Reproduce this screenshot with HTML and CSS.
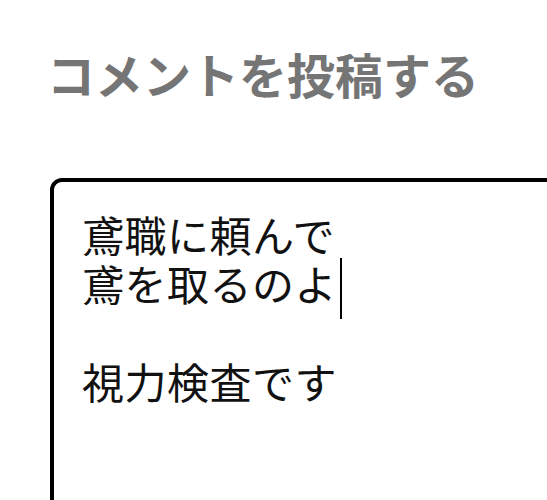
FILE: index.html
```html
<!DOCTYPE html>
<html lang="ja">
<head>
<meta charset="utf-8">
<link rel="stylesheet" href="styles.css">
</head>
<body>
<div class="page">
  <h1 class="title">コメントを投稿する</h1>
  <div class="comment-box">
    <div class="comment-text">鳶職に頼んで<br>鳶を取るのよ<span class="caret"></span><br><br>視力検査です</div>
  </div>
</div>
</body>
</html>
```
FILE: styles.css
```css
html, body {
  margin: 0;
  padding: 0;
  background: #ffffff;
  overflow: hidden;
}
.page {
  padding: 45px 0 0 47px;
  font-family: "Noto Sans CJK JP", sans-serif;
}
.title {
  margin: 0;
  font-size: 48px;
  line-height: 1.2;
  font-weight: 700;
  color: #757575;
}
.comment-box {
  margin: 75px 0 0 3px;
  width: 620px;
  height: 420px;
  border: 4px solid #000;
  border-radius: 12px;
  padding: 27px 28px;
  box-sizing: border-box;
}
.comment-text {
  font-size: 42px;
  line-height: 49px;
  color: #111;
  letter-spacing: 0.5px;
}
.caret {
  position: relative;
}
.caret::after {
  content: "";
  position: absolute;
  left: 3px;
  top: 6px;
  width: 2px;
  height: 61px;
  background: #000;
}
```
